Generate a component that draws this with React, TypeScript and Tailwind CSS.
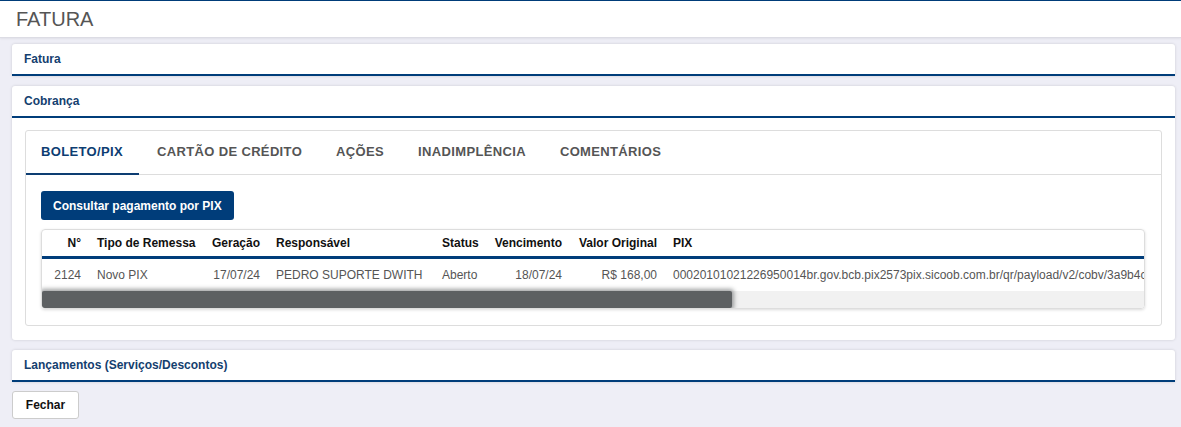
import React from "react";

const FONT = { fontFamily: '"Liberation Sans", Arial, sans-serif' };

function PanelHeader({ title }: { title: string }) {
  return (
    <div className="h-[32px] flex items-center px-3 border-b-2 border-[#003d7a] text-[12px] font-bold text-[#14406f]">
      {title}
    </div>
  );
}

const tabs = ["BOLETO/PIX", "CARTÃO DE CRÉDITO", "AÇÕES", "INADIMPLÊNCIA", "COMENTÁRIOS"];

type Col = { label: string; w: number; align: "left" | "right" };
const cols: Col[] = [
  { label: "N°", w: 47, align: "right" },
  { label: "Tipo de Remessa", w: 115, align: "left" },
  { label: "Geração", w: 64, align: "right" },
  { label: "Responsável", w: 166, align: "left" },
  { label: "Status", w: 52, align: "left" },
  { label: "Vencimento", w: 84, align: "right" },
  { label: "Valor Original", w: 95, align: "right" },
  { label: "PIX", w: 700, align: "left" },
];

const row = [
  "2124",
  "Novo PIX",
  "17/07/24",
  "PEDRO SUPORTE DWITH",
  "Aberto",
  "18/07/24",
  "R$ 168,00",
  "00020101021226950014br.gov.bcb.pix2573pix.sicoob.com.br/qr/payload/v2/cobv/3a9b4c2e8f1d4a7b9e6c0d5f2a8b1c3e",
];

export default function App() {
  return (
    <div className="min-h-[427px] bg-[#eeeef6] border-t border-[#003d7a]" style={FONT}>
      {/* page title */}
      <div className="h-[37px] bg-white border-b border-[#dcdce4] shadow-[0_1px_2px_rgba(0,0,0,0.06)] flex items-center px-4 text-[20px] text-[#555]">
        FATURA
      </div>

      <div className="pl-3 pr-[6px] pt-[6px] flex flex-col gap-[10px]">
        <div className="bg-white rounded-t-[3px] shadow-[0_0_3px_rgba(0,0,0,0.15)]">
          <PanelHeader title="Fatura" />
        </div>

        <div className="bg-white rounded-[3px] shadow-[0_0_3px_rgba(0,0,0,0.15)]">
          <PanelHeader title="Cobrança" />
          <div className="pt-3 pl-[13px] pr-[13px] pb-[14px]">
            <div className="border border-[#dddddd] rounded-[3px]">
              {/* tabs */}
              <div className="flex gap-[2px] border-b border-[#dddddd] h-[44px]">
                {tabs.map((t, i) => (
                  <div
                    key={t}
                    className={
                      "px-4 flex items-center text-[13px] font-bold tracking-[0.35px] -mb-px " +
                      (i === 0
                        ? "pl-[15px] text-[#0d3d72] border-b-2 border-[#0d3d72]"
                        : "text-[#555] border-b-2 border-transparent")
                    }
                  >
                    {t}
                  </div>
                ))}
              </div>

              <div className="pl-[15px] pr-4 pt-4 pb-4">
                <button className="h-[29px] px-[12px] bg-[#003d7a] rounded-[3px] text-white text-[12px] font-bold">
                  Consultar pagamento por PIX
                </button>

                {/* table */}
                <div className="mt-[9px] border border-[#dddddd] rounded-[4px] shadow-[0_1px_3px_rgba(0,0,0,0.15)] overflow-hidden">
                  <div className="overflow-hidden">
                    <div className="flex h-[29px] items-center border-b-[3px] border-[#003d7a] text-[12px] font-bold text-[#111] whitespace-nowrap">
                      {cols.map((c) => (
                        <div
                          key={c.label}
                          className={"px-2 shrink-0 " + (c.align === "right" ? "text-right" : "text-left")}
                          style={{ width: c.w }}
                        >
                          {c.label}
                        </div>
                      ))}
                    </div>
                    <div className="flex h-[32px] items-center text-[12px] text-[#555] whitespace-nowrap">
                      {cols.map((c, i) => (
                        <div
                          key={c.label}
                          className={"px-2 shrink-0 " + (c.align === "right" ? "text-right" : "text-left")}
                          style={{ width: c.w }}
                        >
                          {row[i]}
                        </div>
                      ))}
                    </div>
                  </div>
                  {/* horizontal scrollbar */}
                  <div className="h-[17px] bg-[#f1f1f1] flex">
                    <div className="w-[690px] h-full bg-[#5d6062] rounded-[2px] shadow-[0_0_4px_2px_rgba(93,96,98,0.6)]" />
                  </div>
                </div>
              </div>
            </div>
          </div>
        </div>

        <div className="bg-white rounded-t-[3px] shadow-[0_0_3px_rgba(0,0,0,0.15)]">
          <PanelHeader title="Lançamentos (Serviços/Descontos)" />
        </div>

        <div className="-mt-px">
          <button className="h-[28px] w-[67px] bg-white border border-[#cccccc] rounded-[3px] text-[12px] font-bold text-[#111]">
            Fechar
          </button>
        </div>
      </div>
    </div>
  );
}
